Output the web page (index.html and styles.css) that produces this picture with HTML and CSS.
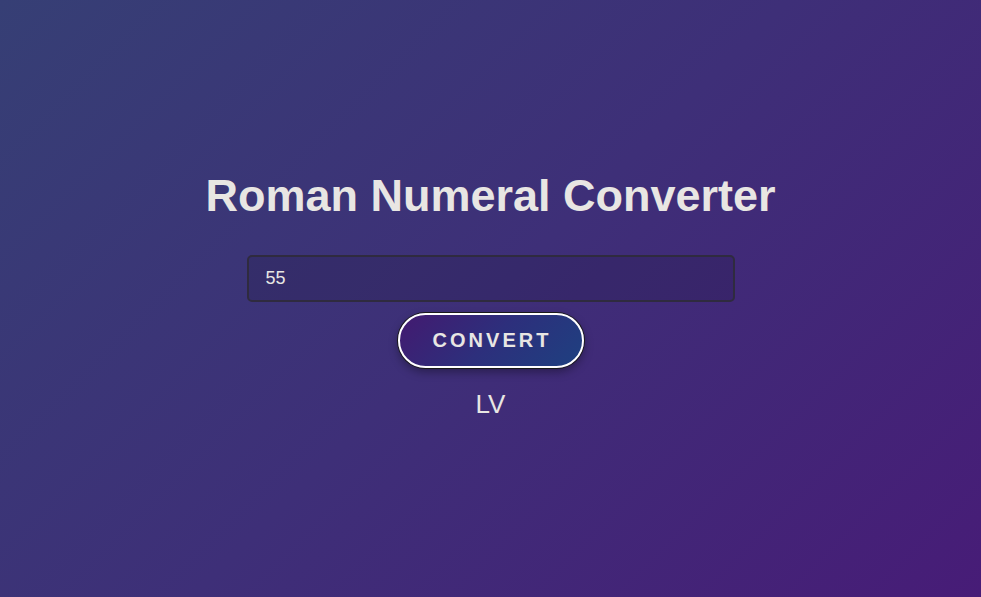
FILE: index.html
```html
<!DOCTYPE html>
<html lang="en">
<head>
<meta charset="utf-8">
<title>Roman Numeral Converter</title>
<link rel="stylesheet" href="styles.css">
</head>
<body>
<main class="app">
  <h1 class="title">Roman Numeral Converter</h1>
  <input class="number-input" type="number" value="55">
  <button class="convert-btn" type="button">CONVERT</button>
  <div class="output">LV</div>
</main>
</body>
</html>
```

FILE: styles.css
```css
* { box-sizing: border-box; }
html, body { height: 100%; }
body {
  margin: 0;
  font-family: "Liberation Sans", Arial, sans-serif;
  color: #e8e6e3;
  background: linear-gradient(135deg, #363f75 0%, #3e2f78 50%, #471c77 100%);
  display: flex;
  align-items: center;
  justify-content: center;
}
.app {
  display: flex;
  flex-direction: column;
  align-items: center;
  margin-top: -7px;
}
.title {
  margin: 0 0 34px;
  font-size: 45px;
  font-weight: 700;
  line-height: 50px;
  color: #e8e6e3;
}
.number-input {
  width: 488px;
  height: 47px;
  padding: 0 17px;
  border: 2px solid #2f2b3f;
  border-radius: 5px;
  background: rgba(20, 15, 50, 0.18);
  color: #e8e6e3;
  font-family: "Liberation Sans", Arial, sans-serif;
  font-size: 18px;
  outline: none;
  -moz-appearance: textfield;
}
.number-input::-webkit-inner-spin-button,
.number-input::-webkit-outer-spin-button { -webkit-appearance: none; margin: 0; }
.convert-btn {
  margin-top: 11px;
  width: 186px;
  height: 55px;
  padding: 0 0 0 3px;
  border: 2px solid #ffffff;
  border-radius: 28px;
  background: linear-gradient(135deg, #431a70 0%, #2d2f7c 50%, #1e4080 100%);
  color: #e8e6e3;
  font-family: "Liberation Sans", Arial, sans-serif;
  font-size: 20px;
  font-weight: 700;
  letter-spacing: 3px;
  box-shadow: 0 0 0 1px #1a1a1a, 0 4px 10px rgba(0, 0, 0, 0.35);
  cursor: pointer;
}
.output {
  margin-top: 21px;
  font-size: 26px;
  line-height: 30px;
  color: #e8e6e3;
}
```
